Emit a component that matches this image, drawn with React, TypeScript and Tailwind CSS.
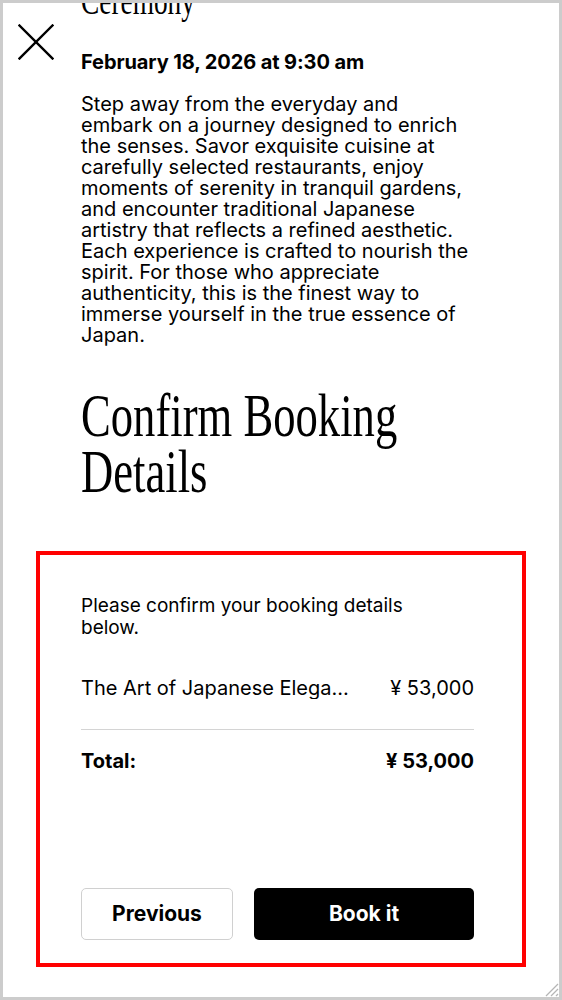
import React from 'react';

function CloseIcon() {
  return (
    <svg width="36" height="36" viewBox="0 0 36 36" fill="none" stroke="#000" strokeWidth="2.4" strokeLinecap="square">
      <line x1="1.5" y1="1.5" x2="34.5" y2="34.5" />
      <line x1="34.5" y1="1.5" x2="1.5" y2="34.5" />
    </svg>
  );
}

function ResizeGrip() {
  return (
    <svg width="16" height="16" viewBox="0 0 16 16" stroke="#b5b5b5" strokeWidth="1.2">
      <line x1="15" y1="3" x2="3" y2="15" />
      <line x1="15" y1="8" x2="8" y2="15" />
      <line x1="15" y1="13" x2="13" y2="15" />
    </svg>
  );
}

export default function App() {
  return (
    <div className="relative w-[562px] h-[1000px] overflow-hidden border-[3px] border-[#cccccc] bg-white text-black font-['Inter','Noto_Sans',sans-serif]">
      <button className="absolute left-[15px] top-[21px]" aria-label="Close">
        <CloseIcon />
      </button>

      <div className="pl-[78px] pr-[85px]">
        <h1 className="-mt-[21px] w-[546px] origin-left scale-x-[0.72] font-['Liberation_Serif',serif] text-[38px] leading-[38px]">
          Ceremony
        </h1>

        <p className="mt-[30px] text-[20px] leading-[24px] font-bold tracking-[-0.1px]">
          February 18, 2026 at 9:30 am
        </p>

        <p className="mt-[20px] text-[20px] leading-[21px]">
          Step away from the everyday and embark on a journey designed to enrich the senses. Savor exquisite cuisine
          at carefully selected restaurants, enjoy moments of serenity in tranquil gardens, and encounter traditional
          Japanese artistry that reflects a refined aesthetic. Each experience is crafted to nourish the spirit. For
          those who appreciate authenticity, this is the finest way to immerse yourself in the true essence of Japan.
        </p>

        <h2 className="mt-[41px] w-[546px] origin-left scale-x-[0.72] font-['Liberation_Serif',serif] text-[62px] leading-[56px]">
          Confirm Booking Details
        </h2>

        <section className="mt-[52px] -ml-[45px] -mr-[52px] h-[416px] flex flex-col border-4 border-[#ff0000] pl-[41px] pr-[48px] pt-[40px] pb-[23px]">
          <p className="max-w-[360px] text-[19px] leading-[22px]">Please confirm your booking details below.</p>

          <div className="mt-[38px] flex items-center justify-between gap-6 border-b border-[#d4d4d4] pb-[30px]">
            <span className="truncate w-[272px] text-[20px] leading-[22px]">The Art of Japanese Elegance</span>
            <span className="shrink-0 text-[20px] leading-[22px]">¥ 53,000</span>
          </div>

          <div className="mt-[20px] flex items-center justify-between text-[20px] leading-[22px] font-bold">
            <span>Total:</span>
            <span>¥ 53,000</span>
          </div>

          <div className="mt-auto flex gap-[21px]">
            <button className="w-[152px] h-[52px] rounded-[5px] border border-[#d0d0d0] bg-white text-[21px] font-bold">
              Previous
            </button>
            <button className="flex-1 h-[52px] rounded-[5px] bg-black text-white text-[21px] font-bold">
              Book it
            </button>
          </div>
        </section>
      </div>

      <div className="absolute right-0 bottom-0">
        <ResizeGrip />
      </div>
    </div>
  );
}
